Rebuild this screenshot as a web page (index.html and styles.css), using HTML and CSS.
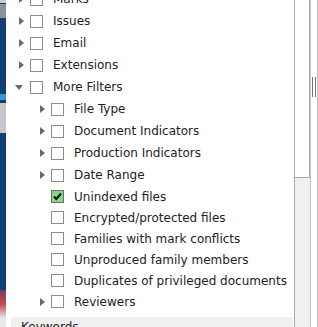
FILE: index.html
```html
<!DOCTYPE html>
<html lang="en">
  <head>
    <meta charset="utf-8" />
    <title>Filters</title>
    <link rel="stylesheet" href="styles.css">
  </head>
  <body>
    <div class="app-strip"></div>

    <!-- Filter tree panel -->
    <div class="filter-panel">
      <ul class="tree">
        <li class="row"><span class="toggle closed"></span><span class="check"></span><span class="label">Marks</span></li>
        <li class="row"><span class="toggle closed"></span><span class="check"></span><span class="label">Issues</span></li>
        <li class="row"><span class="toggle closed"></span><span class="check"></span><span class="label">Email</span></li>
        <li class="row"><span class="toggle closed"></span><span class="check"></span><span class="label">Extensions</span></li>
        <li class="row"><span class="toggle open"></span><span class="check"></span><span class="label">More Filters</span></li>
        <li class="row sub"><span class="toggle closed"></span><span class="check"></span><span class="label">File Type</span></li>
        <li class="row sub"><span class="toggle closed"></span><span class="check"></span><span class="label">Document Indicators</span></li>
        <li class="row sub"><span class="toggle closed"></span><span class="check"></span><span class="label">Production Indicators</span></li>
        <li class="row sub"><span class="toggle closed"></span><span class="check"></span><span class="label">Date Range</span></li>
        <li class="row sub tight"><span class="toggle"></span><span class="check checked"><svg viewBox="0 0 11 11" width="11" height="11"><path d="M2 5.5 L4.3 8 L9 2.5" fill="none" stroke="#111" stroke-width="2"/></svg></span><span class="label">Unindexed files</span></li>
        <li class="row sub tight"><span class="toggle"></span><span class="check"></span><span class="label">Encrypted/protected files</span></li>
        <li class="row sub tight"><span class="toggle"></span><span class="check"></span><span class="label">Families with mark conflicts</span></li>
        <li class="row sub tight"><span class="toggle"></span><span class="check"></span><span class="label">Unproduced family members</span></li>
        <li class="row sub tight"><span class="toggle"></span><span class="check"></span><span class="label">Duplicates of privileged documents</span></li>
        <li class="row sub tight"><span class="toggle closed"></span><span class="check"></span><span class="label">Reviewers</span></li>
      </ul>
      <div class="section-bar">Keywords</div>
    </div>

    <div class="scrollbar">
      <div class="thumb"></div>
    </div>

    <div class="splitter">
      <div class="grip"></div>
    </div>
  </body>
</html>
```
FILE: styles.css
```css
* {
  margin: 0;
  padding: 0;
  box-sizing: border-box;
}

body {
  font-family: 'DejaVu Sans', Verdana, sans-serif;
  font-size: 12px;
  color: #222;
  background: #fff;
  display: flex;
  width: 318px;
  height: 327px;
  overflow: hidden;
}

.app-strip {
  width: 6px;
  flex-shrink: 0;
  background: linear-gradient(to bottom,
    #c9ccd0 0, #c9ccd0 3px, #0f3f73 3px, #0f3f73 4px, #8d9196 4px, #8d9196 18px,
    #0f3f73 18px, #0f3f73 94px, #3b93d4 94px, #3b93d4 100px, #0f3f73 100px,
    #0f3f73 103px, #c4c8cc 103px, #c4c8cc 133px, #0f3f73 133px, #0f3f73 290px,
    #7a3a5a 290px, #c0505a 305px, #e8e8ea 318px);
}

.filter-panel {
  width: 288px;
  flex-shrink: 0;
  overflow: hidden;
  display: flex;
  flex-direction: column;
}

.tree {
  list-style: none;
  margin-top: -12px;
}

.row {
  display: flex;
  align-items: center;
  height: 22px;
  flex-shrink: 0;
  padding-left: 9px;
  white-space: nowrap;
}

.row.sub {
  padding-left: 30px;
}

.row.tight {
  height: 21px;
}

.toggle {
  width: 12px;
  height: 12px;
  display: flex;
  align-items: center;
  justify-content: center;
  flex-shrink: 0;
}

.toggle.closed::before {
  content: "";
  border-left: 5px solid #6a6a6a;
  border-top: 4px solid transparent;
  border-bottom: 4px solid transparent;
}

.toggle.open::before {
  content: "";
  margin-left: -4px;
  border-top: 5px solid #6a6a6a;
  border-left: 4px solid transparent;
  border-right: 4px solid transparent;
}

.check {
  width: 13px;
  height: 13px;
  margin-left: 3px;
  border: 1px solid #8c8c8c;
  background: #fff;
  flex-shrink: 0;
  display: flex;
  align-items: center;
  justify-content: center;
}

.check.checked {
  background: #86d986;
  border-color: #6d6d6d;
}

.label {
  margin-left: 10px;
}

.section-bar {
  margin: auto 1px 0 5px;
  height: 10px;
  flex-shrink: 0;
  background: #f0f0f0;
  padding: 3px 0 0 10px;
  line-height: 14px;
  overflow: hidden;
}

.scrollbar {
  width: 16px;
  flex-shrink: 0;
  background: #f0f0f0;
  border-left: 1px solid #aaa;
}

.thumb {
  height: 180px;
  margin-top: -2px;
  background: #fff;
  border: 1px solid #aaa;
  border-left: none;
}

.splitter {
  width: 8px;
  flex-shrink: 0;
  border-left: 1px solid #c4c4c4;
  border-right: 1px solid #c8c8c8;
  padding-top: 77px;
}

.grip {
  width: 4px;
  height: 20px;
  margin-left: 1px;
  border-left: 1px solid #777;
  border-right: 1px solid #777;
}
```
